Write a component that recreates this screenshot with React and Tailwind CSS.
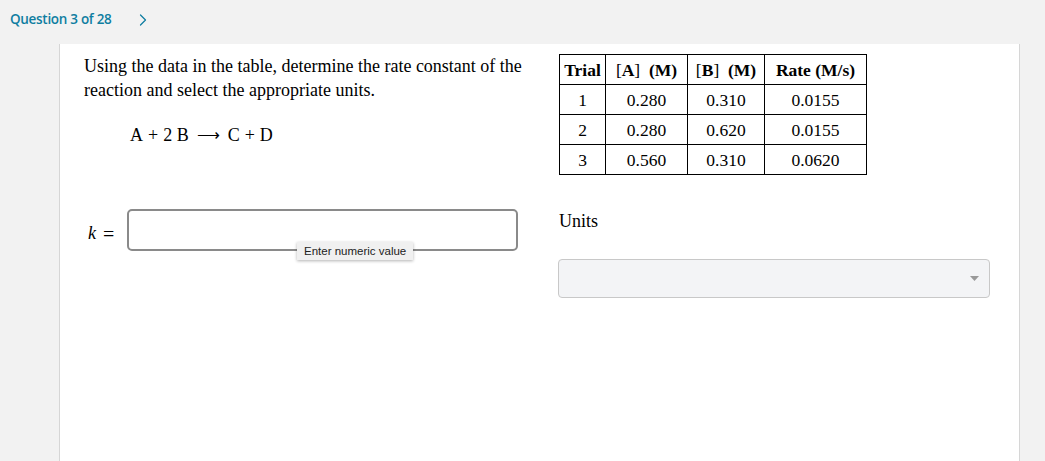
import { ChevronRight } from "lucide-react";

const serif = { fontFamily: '"Liberation Serif", "Times New Roman", serif' };

const rows = [
  ["1", "0.280", "0.310", "0.0155"],
  ["2", "0.280", "0.620", "0.0155"],
  ["3", "0.560", "0.310", "0.0620"],
];

const RateTable = () => (
  <table className="border-collapse border border-black text-[17.5px] leading-[20px] text-black text-center table-fixed" style={serif}>
    <thead>
      <tr className="h-[30px]">
        <th className="border border-black w-[46px] p-0 font-bold">Trial</th>
        <th className="border border-black w-[82px] p-0 font-normal whitespace-nowrap">
          [<b>A</b>]&nbsp; <b>(M)</b>
        </th>
        <th className="border border-black w-[77px] p-0 font-normal whitespace-nowrap">
          [<b>B</b>]&nbsp; <b>(M)</b>
        </th>
        <th className="border border-black w-[102px] p-0 font-bold whitespace-nowrap">Rate (M/s)</th>
      </tr>
    </thead>
    <tbody>
      {rows.map((r, i) => (
        <tr key={i} className="h-[30px]">
          {r.map((c, j) => (
            <td key={j} className="border border-black p-0">
              {c}
            </td>
          ))}
        </tr>
      ))}
    </tbody>
  </table>
);

export default function App() {
  return (
    <div className="min-h-[461px] bg-[#f2f2f2] overflow-hidden" style={{ fontFamily: '"Open Sans", sans-serif' }}>
      {/* header */}
      <div className="h-[44px] flex items-start pt-[9px] pl-[10px]">
        <span className="text-[13.5px] font-semibold text-[#0f7ea1] tracking-[-0.3px]">Question 3 of 28</span>
        <ChevronRight className="ml-[22px] mt-[1px] w-[20px] h-[20px] text-[#0f7ea1]" strokeWidth={1.5} />
      </div>

      <div className="ml-[59px] w-[961px] min-h-[417px] bg-white border-x border-[#d6d6d6] pt-[10px] pl-[24px]">
        <div className="flex">
          <div className="w-[475px] text-[18px] leading-[24px] text-black" style={serif}>
            <p className="pr-[20px]">
              Using the data in the table, determine the rate constant of the reaction and select the appropriate units.
            </p>
            <p className="mt-[21px] pl-[46px] flex items-center whitespace-pre">
              <span>A</span>
              <span className="mx-[5px]">+</span>
              <span>2 B</span>
              <span className="mx-[8px] text-[16px]">⟶</span>
              <span>C</span>
              <span className="mx-[5px]">+</span>
              <span>D</span>
            </p>
          </div>
          <RateTable />
        </div>

        <div className="flex mt-[34px]">
          <div className="w-[475px] flex items-start">
            <span className="w-[43px] pl-[4px] mt-[11px] text-[18px] text-black whitespace-pre flex items-center" style={serif}>
              <i>k</i>
              <span className="ml-[7px] text-[20px] leading-[20px]">=</span>
            </span>
            <div className="relative">
              <div className="w-[391px] h-[42px] border-2 border-[#8a8a8a] rounded-[5px] bg-white" />
              <div className="absolute left-[170px] top-[33px] h-[18px] px-[7px] bg-[#f0f0f0] text-[11.5px] leading-[18px] text-[#222] shadow-[0_1px_3px_rgba(0,0,0,0.3)]" style={{ fontFamily: '"Liberation Sans", Arial, sans-serif' }}>
                Enter numeric value
              </div>
            </div>
          </div>
          <div>
            <div className="text-[18px] leading-[24px] text-black" style={serif}>Units</div>
            <div className="mt-[26px] -ml-px w-[432px] h-[39px] bg-[#f3f4f6] border border-[#c8c8c8] rounded-[4px] flex items-center justify-end pr-[10px]">
              <svg width="9" height="5" viewBox="0 0 9 5">
                <path d="M0 0 L9 0 L4.5 5 Z" fill="#999" />
              </svg>
            </div>
          </div>
        </div>
      </div>
    </div>
  );
}
